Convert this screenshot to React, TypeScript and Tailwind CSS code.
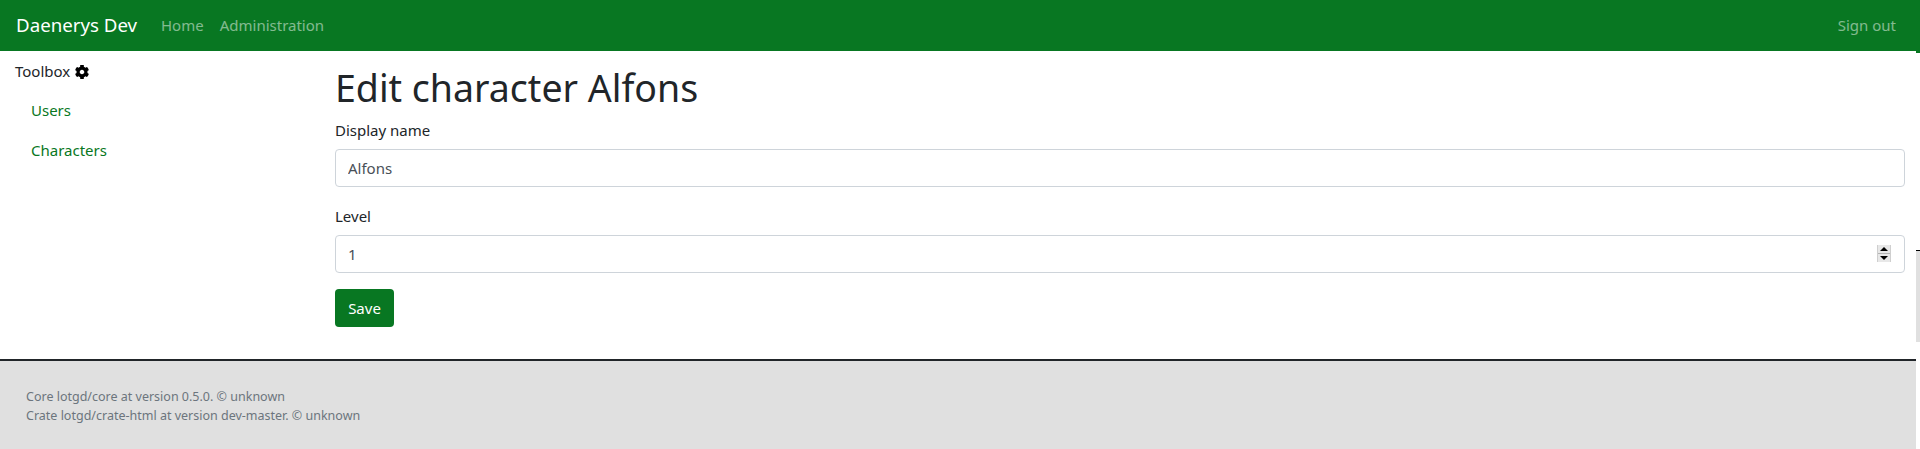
const Spinner = () => (
  <div className="absolute right-[14px] top-[10px] flex h-[17px] w-[14px] flex-col border-x border-[#cfcfcf] bg-[#e8e8e8]">
    <div className="flex flex-1 items-center justify-center">
      <div className="h-0 w-0 border-x-[4px] border-b-[4px] border-x-transparent border-b-black"></div>
    </div>
    <div className="h-px bg-[#b4b4b4]"></div>
    <div className="flex flex-1 items-center justify-center">
      <div className="h-0 w-0 border-x-[4px] border-t-[4px] border-x-transparent border-t-black"></div>
    </div>
  </div>
);

const Gear = () => (
  <svg viewBox="16 12 480 488" fill="currentColor" className="ml-[5px] mt-[2px] h-[14px] w-[14px] text-black">
    <path d="M487.4 315.7l-42.6-24.6c4.3-23.2 4.3-47 0-70.2l42.6-24.6c4.9-2.8 7.1-8.6 5.5-14-11.1-35.6-30-67.8-54.7-94.6-3.8-4.1-10-5.1-14.8-2.3L380.8 110c-17.9-15.4-38.5-27.3-60.8-35.1V25.8c0-5.6-3.9-10.5-9.4-11.7-36.7-8.2-74.3-7.8-109.2 0-5.5 1.2-9.4 6.1-9.4 11.7V75c-22.2 7.9-42.8 19.8-60.8 35.1L88.7 85.5c-4.9-2.8-11-1.9-14.8 2.3-24.7 26.7-43.6 58.9-54.7 94.6-1.7 5.4.6 11.2 5.5 14L67.3 221c-4.3 23.2-4.3 47 0 70.2l-42.6 24.6c-4.9 2.8-7.1 8.6-5.5 14 11.1 35.6 30 67.8 54.7 94.6 3.8 4.1 10 5.1 14.8 2.3l42.6-24.6c17.9 15.4 38.5 27.3 60.8 35.1v49.2c0 5.6 3.9 10.5 9.4 11.7 36.7 8.2 74.3 7.8 109.2 0 5.5-1.2 9.4-6.1 9.4-11.7v-49.2c22.2-7.9 42.8-19.8 60.8-35.1l42.6 24.6c4.9 2.8 11 1.9 14.8-2.3 24.7-26.7 43.6-58.9 54.7-94.6 1.5-5.5-.7-11.3-5.6-14.1zM256 336c-44.1 0-80-35.9-80-80s35.9-80 80-80 80 35.9 80 80-35.9 80-80 80z" />
  </svg>
);

const App = () => (
  <div className="flex h-[449px] w-[1920px] overflow-hidden bg-white font-['Noto_Sans','Open_Sans',sans-serif] text-[15px] text-[#212529]">
    <div className="flex w-[1916px] flex-col">
      {/* Navbar */}
      <nav className="flex h-[51px] items-center bg-[#087722] pl-4 pr-[12px]">
        <a className="mr-[16px] w-[121px] whitespace-nowrap text-[18.7px] text-white">Daenerys Dev</a>
        <a className="px-2 text-white/50">Home</a>
        <a className="px-2 text-white/50">Administration</a>
        <a className="ml-auto px-2 text-white/50">Sign out</a>
      </nav>

      {/* Body */}
      <div className="flex h-[308px]">
        <aside className="w-[319px] pl-[15px] pt-[8px]">
          <div className="flex items-center leading-6">
            Toolbox
            <Gear />
          </div>
          <ul className="mt-[7px]">
            <li className="px-4 py-2 leading-6 text-[#087722]">Users</li>
            <li className="px-4 py-2 leading-6 text-[#087722]">Characters</li>
          </ul>
        </aside>
        <main className="flex-1 pl-[16px] pr-[11px] pt-[13px]">
          <h1 className="mb-[6px] text-[37.5px] leading-[48px]">Edit character Alfons</h1>
          <div className="mb-[17px]">
            <label className="mb-[7px] block leading-6">Display name</label>
            <input
              defaultValue="Alfons"
              className="block h-[38px] w-full rounded border border-[#ced4da] px-3 text-[#495057]"
            />
          </div>
          <div className="mb-4">
            <label className="mb-[7px] block leading-6">Level</label>
            <div className="relative">
              <input
                defaultValue="1"
                className="block h-[38px] w-full rounded border border-[#ced4da] px-3 text-[#495057]"
              />
              <Spinner />
            </div>
          </div>
          <button className="h-[38px] w-[59px] rounded bg-[#087722] text-white">Save</button>
        </main>
      </div>

      {/* Footer */}
      <footer className="flex-1 border-t-2 border-[#212529] bg-[#e0e0e0] px-[26px] pt-[26px] text-[12.5px] leading-[19px] text-[#6c757d]">
        <p>Core lotgd/core at version 0.5.0. © unknown</p>
        <p>Crate lotgd/crate-html at version dev-master. © unknown</p>
      </footer>
    </div>

    {/* Page scrollbar strip */}
    <div className="flex w-1 flex-col">
      <div className="h-[53px] bg-[#087722]"></div>
      <div className="h-[197px]"></div>
      <div className="h-[92px] border-t border-black bg-[#e0e0e0]"></div>
    </div>
  </div>
);

export default App;
